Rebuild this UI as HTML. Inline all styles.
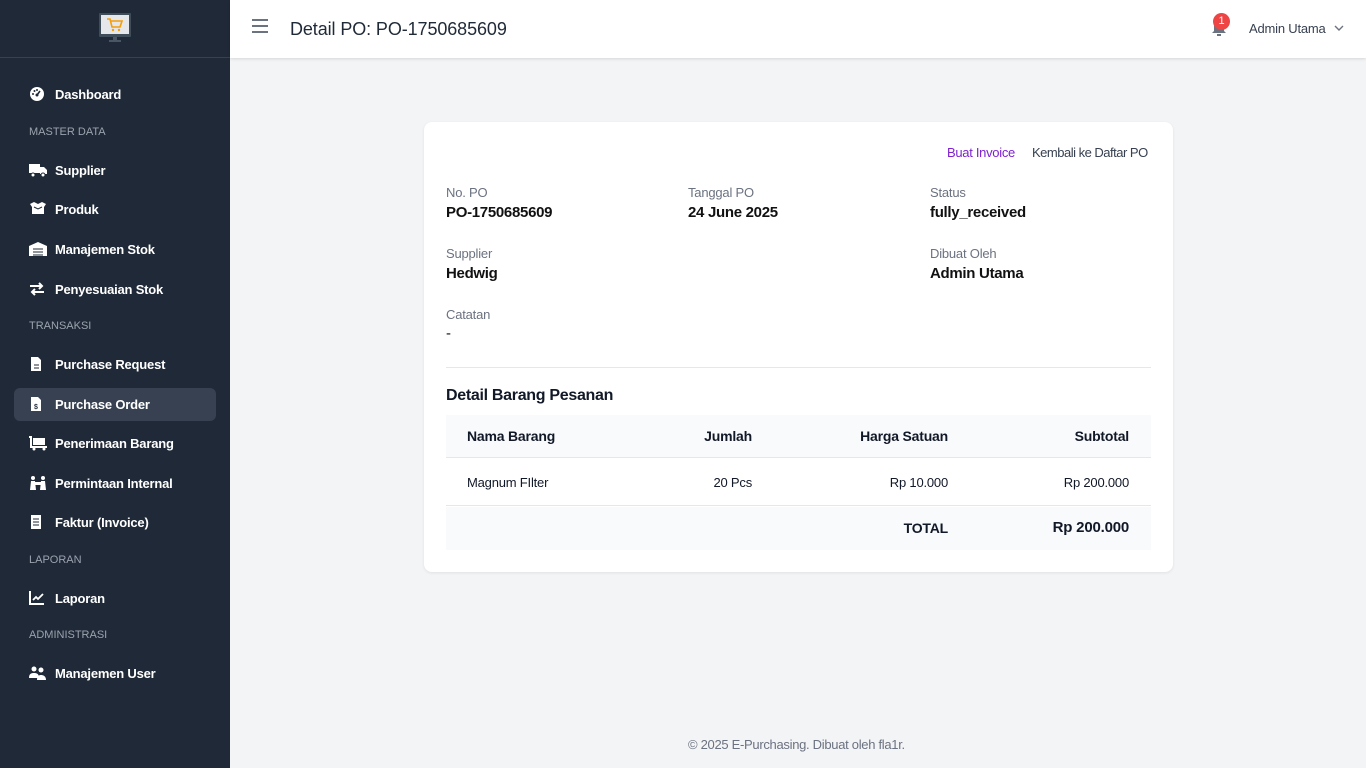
<!DOCTYPE html>
<html><head><meta charset="utf-8"><style>
*{margin:0;padding:0;box-sizing:border-box}
body{width:1366px;height:768px;overflow:hidden;background:#f3f4f6;font-family:"Liberation Sans",sans-serif;color:#111827;position:relative}
.sb{position:absolute;left:0;top:0;width:230px;height:768px;background:#1f2937}
.sb .line{position:absolute;left:0;top:57px;width:230px;height:1px;background:#374151}
.it{position:absolute;left:0;width:230px;height:20px;color:#fff;font-size:13px;font-weight:bold;line-height:20px}
.it span{position:absolute;left:55px;top:1px;letter-spacing:-0.2px}
.it svg{position:absolute;left:29px;top:2px}
.sec{position:absolute;left:29px;font-size:11px;color:#9ca3af;line-height:14px}
.act{position:absolute;left:14px;top:388px;width:202px;height:33px;background:#374151;border-radius:6px}
.hd{position:absolute;left:230px;top:0;width:1136px;height:58px;background:#fff;box-shadow:0 1px 3px rgba(0,0,0,.12)}
.card{position:absolute;left:424px;top:122px;width:749px;height:450px;background:#fff;border-radius:8px;box-shadow:0 1px 3px rgba(0,0,0,.08)}
.a{position:absolute;font-size:13px;line-height:16px;letter-spacing:-0.3px}
.lb{position:absolute;font-size:13px;color:#6b7280;line-height:16px;letter-spacing:-0.2px}
.vl{position:absolute;font-size:15px;font-weight:bold;color:#111;line-height:18px;letter-spacing:-0.3px}
.t{position:absolute;font-size:14px;line-height:18px;letter-spacing:-0.2px}
</style></head><body>
<div class="sb">
<svg style="position:absolute;left:99px;top:13px" width="32" height="30" viewBox="0 0 32 30"><rect x="0" y="0" width="32" height="24" rx="1" fill="#3f4c5a"/><rect x="2" y="2" width="28" height="19" fill="#e5e7eb"/><path d="M8 6h3l2 8h8l2-6H12" fill="none" stroke="#f59e0b" stroke-width="1.6"/><circle cx="14" cy="17" r="1.2" fill="#f59e0b"/><circle cx="20" cy="17" r="1.2" fill="#f59e0b"/><rect x="14" y="24" width="4" height="3" fill="#4b5563"/><rect x="10" y="27" width="12" height="2" fill="#4b5563"/></svg>
<div class="line"></div>
<div class="act"></div>
<div class="it" style="top:84px"><svg width="16" height="16" viewBox="0 0 16 16"><circle cx="8" cy="8" r="7" fill="#fff"/><path d="M8 9L11 5" stroke="#1f2937" stroke-width="1.6"/><circle cx="8" cy="9" r="1.5" fill="#1f2937"/><circle cx="4" cy="8" r="1" fill="#1f2937"/><circle cx="5.5" cy="5" r="1" fill="#1f2937"/><circle cx="8" cy="4" r="1" fill="#1f2937"/></svg><span>Dashboard</span></div>
<div class="sec" style="top:125px">MASTER DATA</div>
<div class="it" style="top:160px"><svg width="18" height="16" viewBox="0 0 18 16"><rect x="0" y="2" width="11" height="9" fill="#fff"/><path d="M11 5h4l3 3v4h-7z" fill="#fff"/><circle cx="4" cy="13" r="2" fill="#fff" stroke="#1f2937"/><circle cx="14" cy="13" r="2" fill="#fff" stroke="#1f2937"/></svg><span>Supplier</span></div>
<div class="it" style="top:199px"><svg width="18" height="16" viewBox="0 0 18 16"><path d="M1 3l4-2 4 2 4-2 4 2-2 3v7H3V6z" fill="#fff"/><path d="M5 6l4 2 4-2" stroke="#1f2937" fill="none"/></svg><span>Produk</span></div>
<div class="it" style="top:239px"><svg width="18" height="16" viewBox="0 0 18 16"><path d="M0 5L9 1l9 4v10H0z" fill="#fff"/><path d="M4 8h10M4 11h10M4 14h10" stroke="#1f2937"/></svg><span>Manajemen Stok</span></div>
<div class="it" style="top:279px"><svg width="16" height="16" viewBox="0 0 16 16"><path d="M1 5h12M10 2l3 3-3 3M15 11H3M6 8l-3 3 3 3" stroke="#fff" stroke-width="2" fill="none"/></svg><span>Penyesuaian Stok</span></div>
<div class="sec" style="top:319px">TRANSAKSI</div>
<div class="it" style="top:354px"><svg width="14" height="16" viewBox="0 0 14 16"><path d="M2 1h7l3 3v11H2z" fill="#fff"/><path d="M5 9h5M5 12h5" stroke="#1f2937"/></svg><span>Purchase Request</span></div>
<div class="it" style="top:394px"><svg width="14" height="16" viewBox="0 0 14 16"><path d="M2 1h7l3 3v11H2z" fill="#fff"/><text x="5" y="13" font-size="7" fill="#1f2937" font-family="Liberation Sans">$</text></svg><span>Purchase Order</span></div>
<div class="it" style="top:433px"><svg width="18" height="16" viewBox="0 0 18 16"><path d="M0 2h2v10h16" stroke="#fff" stroke-width="2" fill="none"/><rect x="4" y="3" width="12" height="7" fill="#fff"/><circle cx="5" cy="14" r="1.5" fill="#fff"/><circle cx="15" cy="14" r="1.5" fill="#fff"/></svg><span>Penerimaan Barang</span></div>
<div class="it" style="top:473px"><svg width="18" height="16" viewBox="0 0 18 16"><circle cx="4" cy="3" r="2" fill="#fff"/><circle cx="14" cy="3" r="2" fill="#fff"/><path d="M1 15l1-9h4l1 9M11 15l1-9h4l1 9" fill="#fff"/><rect x="6" y="7" width="6" height="3" fill="#fff"/></svg><span>Permintaan Internal</span></div>
<div class="it" style="top:512px"><svg width="14" height="16" viewBox="0 0 14 16"><rect x="2" y="1" width="10" height="14" fill="#fff"/><path d="M4 5h6M4 8h6M4 11h6" stroke="#1f2937"/></svg><span>Faktur (Invoice)</span></div>
<div class="sec" style="top:553px">LAPORAN</div>
<div class="it" style="top:588px"><svg width="16" height="16" viewBox="0 0 16 16"><path d="M1 1v13h14" stroke="#fff" stroke-width="2" fill="none"/><path d="M4 10l3-3 2 2 5-5" stroke="#fff" stroke-width="1.8" fill="none"/></svg><span>Laporan</span></div>
<div class="sec" style="top:628px">ADMINISTRASI</div>
<div class="it" style="top:663px"><svg width="18" height="16" viewBox="0 0 18 16"><circle cx="5" cy="4" r="2.5" fill="#fff"/><circle cx="12" cy="5" r="2.5" fill="#fff"/><path d="M0 13c0-4 2-5 5-5s5 1 5 5zM8 15c0-4 2-5 4-5s5 1 5 5z" fill="#fff"/></svg><span>Manajemen User</span></div>
</div>
<div class="hd">
<svg style="position:absolute;left:22px;top:19px" width="16" height="14" viewBox="0 0 16 14"><path d="M0 1h16M0 7h16M0 13h16" stroke="#6b7280" stroke-width="2"/></svg>
<div style="position:absolute;left:60px;top:18px;font-size:18px;color:#1f2937;line-height:22px;letter-spacing:-0.1px">Detail PO: PO-1750685609</div>
<svg style="position:absolute;left:981px;top:19px" width="16" height="18" viewBox="0 0 16 18"><path d="M8 2c3 0 5 2 5 5v5l2 2H1l2-2V7c0-3 2-5 5-5z" fill="#6b7280"/><rect x="6" y="15" width="4" height="2" fill="#6b7280"/></svg>
<div style="position:absolute;left:983px;top:13px;width:17px;height:17px;border-radius:50%;background:#ef4444;color:#fff;font-size:11px;text-align:center;line-height:17px">1</div>
<div style="position:absolute;left:1019px;top:20px;font-size:13px;color:#374151;line-height:17px;letter-spacing:-0.2px">Admin Utama</div>
<svg style="position:absolute;left:1104px;top:25px" width="10" height="7" viewBox="0 0 10 7"><path d="M1 1l4 4 4-4" stroke="#6b7280" stroke-width="1.4" fill="none"/></svg>
</div>
<div class="card">
<div class="a" style="left:523px;top:23px;color:#7e22ce">Buat Invoice</div>
<div class="a" style="left:608px;top:23px;color:#374151;letter-spacing:-0.5px">Kembali ke Daftar PO</div>
<div class="lb" style="left:22px;top:63px">No. PO</div><div class="vl" style="left:22px;top:82px">PO-1750685609</div>
<div class="lb" style="left:264px;top:63px">Tanggal PO</div><div class="vl" style="left:264px;top:82px">24 June 2025</div>
<div class="lb" style="left:506px;top:63px">Status</div><div class="vl" style="left:506px;top:82px">fully_received</div>
<div class="lb" style="left:22px;top:124px">Supplier</div><div class="vl" style="left:22px;top:143px">Hedwig</div>
<div class="lb" style="left:506px;top:124px">Dibuat Oleh</div><div class="vl" style="left:506px;top:143px">Admin Utama</div>
<div class="lb" style="left:22px;top:185px">Catatan</div><div class="vl" style="left:22px;top:203px;font-weight:normal">-</div>
<div style="position:absolute;left:22px;top:245px;width:705px;height:1px;background:#e5e7eb"></div>
<div style="position:absolute;left:22px;top:264px;font-size:16px;font-weight:bold;line-height:20px;letter-spacing:-0.3px">Detail Barang Pesanan</div>
<div style="position:absolute;left:22px;top:293px;width:705px;height:43px;background:#f9fafb;border-bottom:1px solid #e5e7eb"></div>
<div style="position:absolute;left:22px;top:336px;width:705px;height:48px;border-bottom:1px solid #e5e7eb"></div>
<div style="position:absolute;left:22px;top:385px;width:705px;height:43px;background:#f9fafb"></div>
<div class="t" style="left:43px;top:305px;font-weight:bold">Nama Barang</div>
<div class="t" style="right:421px;top:305px;font-weight:bold">Jumlah</div>
<div class="t" style="right:225px;top:305px;font-weight:bold">Harga Satuan</div>
<div class="t" style="right:44px;top:305px;font-weight:bold">Subtotal</div>
<div class="t" style="left:43px;top:352px;font-size:13px">Magnum FIlter</div>
<div class="t" style="right:421px;top:352px;font-size:13px">20 Pcs</div>
<div class="t" style="right:225px;top:352px;font-size:13px">Rp 10.000</div>
<div class="t" style="right:44px;top:352px;font-size:13px">Rp 200.000</div>
<div class="t" style="right:225px;top:397px;font-weight:bold">TOTAL</div>
<div class="t" style="right:44px;top:397px;font-weight:bold;font-size:15px">Rp 200.000</div>
</div>
<div style="position:absolute;left:688px;top:737px;font-size:13px;color:#6b7280;line-height:16px;letter-spacing:-0.3px">© 2025 E-Purchasing. Dibuat oleh fla1r.</div>
</body></html>
